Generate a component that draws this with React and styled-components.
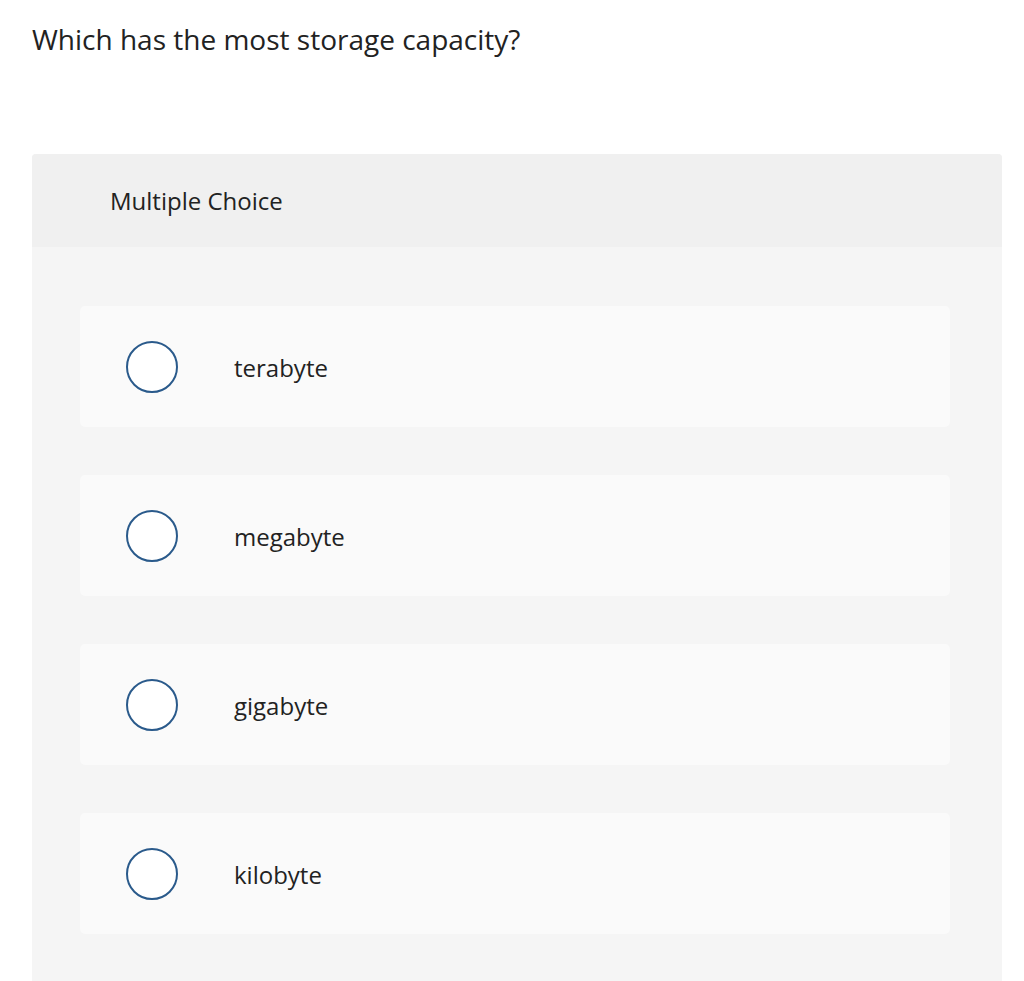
import React from 'react'
import styled, { createGlobalStyle } from 'styled-components'

const Global = createGlobalStyle`
  body {
    margin: 0;
    background: #fff;
    font-family: 'Open Sans', Lato, sans-serif;
    color: #222;
  }
`

const Page = styled.div`
  padding: 20px 22px 0 32px;
  height: 981px;
  box-sizing: border-box;
  overflow: hidden;
`

const Question = styled.h1`
  margin: 0;
  font-size: 28px;
  font-weight: 400;
  line-height: 38px;
  color: #222;
`

const Panel = styled.div`
  margin-top: 96px;
  width: 970px;
  border-radius: 4px 4px 0 0;
  background: #f5f5f5;
  overflow: hidden;
`

const PanelHeader = styled.div`
  height: 93px;
  background: #f0f0f0;
  display: flex;
  align-items: center;
  padding-left: 78px;
  font-size: 24px;
  color: #222;
`

const Choices = styled.div`
  display: flex;
  flex-direction: column;
  gap: 48px;
  padding: 59px 52px 60px 48px;
`

const Choice = styled.label`
  height: 121px;
  border-radius: 5px;
  background: #fafafa;
  display: flex;
  align-items: center;
  padding-left: 46px;
  gap: 56px;
  cursor: pointer;
`

const Radio = styled.span`
  width: 48px;
  height: 48px;
  border-radius: 50%;
  border: 2px solid #2a5a8b;
  background: #fff;
  flex: none;
`

const ChoiceText = styled.span`
  font-size: 24px;
  color: #222;
  padding-top: 2px;
`

const options = ['terabyte', 'megabyte', 'gigabyte', 'kilobyte']

export default function App() {
  return (
    <Page>
      <Global />
      <Question>Which has the most storage capacity?</Question>
      <Panel>
        <PanelHeader>Multiple Choice</PanelHeader>
        <Choices>
          {options.map(o => (
            <Choice key={o}>
              <Radio />
              <ChoiceText>{o}</ChoiceText>
            </Choice>
          ))}
        </Choices>
      </Panel>
    </Page>
  )
}
